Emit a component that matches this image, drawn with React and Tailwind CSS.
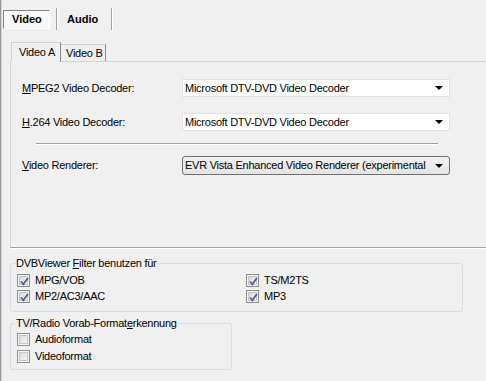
import React from "react";

// kleine Hilfskomponenten im Windows-Stil
function Check({ checked }) {
  return (
    <span className="w-[13px] h-[13px] border border-[#8e8f8f] bg-[#f4f4f4] p-[1px] shrink-0">
      <span className="relative block w-full h-full bg-gradient-to-br from-[#d8d8d8] to-[#f8f8f8] border border-[#c6c6c6]">
        {checked && (
          <svg className="absolute left-[-1px] top-[-1px]" width="11" height="11" viewBox="0 0 11 11">
            <path d="M2 5.5 L4.3 8.3 L9 2" fill="none" stroke="#4a5f97" strokeWidth="1.8" />
          </svg>
        )}
      </span>
    </span>
  );
}

function Arrow() {
  return (
    <svg width="8" height="4" viewBox="0 0 8 4" className="shrink-0">
      <polygon points="0,0 8,0 4,4" fill="#000" />
    </svg>
  );
}

function U({ children }) {
  return <span className="underline underline-offset-[1px]">{children}</span>;
}

export default function App() {
  return (
    <div className="w-[486px] h-[381px] overflow-hidden bg-[#f0f0f0] border-l border-[#9a9a9a] shadow-[inset_1px_0_0_#d4d4d4] text-[11px] leading-none tracking-[-0.25px] text-black font-['Liberation_Sans',Arial,sans-serif]">
      {/* obere Reiter */}
      <div className="flex items-start h-[22px] mt-[8px] tracking-normal">
        <div className="ml-[2px] mt-[2px] w-[47px] h-[19px] border border-t-[#858585] border-l-[#858585] border-r-white border-b-white bg-[#f8f8f8] font-bold pl-[8px] flex items-center">
          Video
        </div>
        <div className="ml-[6px] w-[2px] h-[22px] border-l border-l-[#a0a0a0] border-r border-r-white" />
        <div className="ml-[9px] h-[22px] flex items-center font-bold">Audio</div>
        <div className="ml-[13px] w-[2px] h-[22px] border-l border-l-[#a0a0a0] border-r border-r-white" />
      </div>

      {/* innere Reiter */}
      <div className="mt-[12px] ml-[9px]">
        <div className="flex items-end h-[19px] pl-[1px]">
          <div className="relative z-10 mb-[-1px] w-[50px] h-[20px] border border-b-0 border-[#d2d2d2] border-r-[#8a8a8a] bg-[#f0f0f0] flex items-center pl-[7px]">
            Video A
          </div>
          <div className="w-[45px] h-[17px] border border-b-0 border-[#d2d2d2] border-l-0 border-r-[#8a8a8a] flex items-center pl-[5px]">
            Video B
          </div>
        </div>
        <div className="h-[187px] border-t border-l border-[#d5d5d5] border-b border-b-[#a0a0a0] shadow-[0_1px_0_#fff] pl-[11px]">
          <div className="mt-[17px] flex items-center h-[18px]">
            <div className="w-[160px]"><U>M</U>PEG2 Video Decoder:</div>
            <div className="w-[268px] h-[18px] bg-white border border-[#e2e2e2] flex items-center pl-[2px] pr-[6px] justify-between">
              <span>Microsoft DTV-DVD Video Decoder</span>
              <Arrow />
            </div>
          </div>
          <div className="mt-[16px] flex items-center h-[18px]">
            <div className="w-[160px]"><U>H</U>.264 Video Decoder:</div>
            <div className="w-[268px] h-[18px] bg-white border border-[#e2e2e2] flex items-center pl-[2px] pr-[6px] justify-between">
              <span>Microsoft DTV-DVD Video Decoder</span>
              <Arrow />
            </div>
          </div>
          <div className="mt-[12px] ml-[14px] w-[402px] h-[2px] border-t border-t-[#a0a0a0] border-b border-b-white" />
          <div className="mt-[11px] flex items-center h-[19px]">
            <div className="w-[160px]"><U>V</U>ideo Renderer:</div>
            <div className="w-[268px] h-[19px] rounded-[3px] border border-[#707070] bg-gradient-to-b from-[#f2f2f2] to-[#e4e4e4] flex items-center pl-[2px] pr-[6px]">
              <span className="whitespace-nowrap">EVR Vista Enhanced Video Renderer (experimental</span>
              <span className="ml-auto"><Arrow /></span>
            </div>
          </div>
        </div>
      </div>

      {/* Gruppe 1 */}
      <div className="relative mt-[15px] ml-[9px] w-[453px] h-[49px] rounded-[3px] border border-[#d5dfe5] pl-[6px] pt-[10px]">
        <div className="absolute left-[4px] top-[-6px] px-[1px] bg-[#f0f0f0]">
          DVBViewer <U>F</U>ilter benutzen für
        </div>
        <div className="grid grid-cols-[229px_1fr] gap-y-[3px]">
          <div className="flex items-center h-[13px]"><Check checked /><span className="ml-[5px]">MPG/VOB</span></div>
          <div className="flex items-center h-[13px]"><Check checked /><span className="ml-[5px]">TS/M2TS</span></div>
          <div className="flex items-center h-[13px]"><Check checked /><span className="ml-[5px]">MP2/AC3/AAC</span></div>
          <div className="flex items-center h-[13px]"><Check checked /><span className="ml-[5px]">MP3</span></div>
        </div>
      </div>

      {/* Gruppe 2 */}
      <div className="relative mt-[11px] ml-[9px] w-[222px] h-[47px] rounded-[3px] border border-[#d5dfe5] pl-[6px] pt-[9px]">
        <div className="absolute left-[4px] top-[-6px] px-[1px] bg-[#f0f0f0]">
          TV/Radio Vorab-Format<U>e</U>rkennung
        </div>
        <div className="flex flex-col gap-[4px]">
          <div className="flex items-center h-[13px]"><Check /><span className="ml-[5px]">Audioformat</span></div>
          <div className="flex items-center h-[13px]"><Check /><span className="ml-[5px]">Videoformat</span></div>
        </div>
      </div>
    </div>
  );
}
